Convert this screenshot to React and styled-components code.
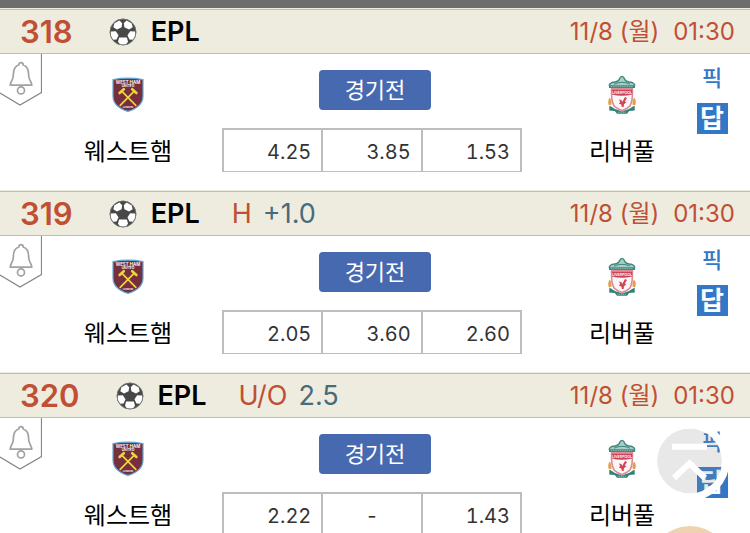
import React from 'react';
import styled, { createGlobalStyle } from 'styled-components';

const GlobalStyle = createGlobalStyle`
    * {
        box-sizing: border-box;
    }

    html {
        scrollbar-width: none;
    }

    body {
        margin: 0;
        background: #fff;
        color: #000;
        font-family: Inter, 'Noto Sans CJK KR', sans-serif;
    }

    button {
        font-family: inherit;
        padding: 0;
        border: none;
        cursor: pointer;
    }
`

const TopBar = styled.div`
    height: 8px;
    background: #6d6d6d;
`

const MatchHeader = styled.header`
    display: flex;
    align-items: center;
    height: 46px;
    padding: 2px 15px 0 20px;
    background: #eeecdf;
    border-bottom: 1px solid #bdbdba;
    box-shadow: inset 0 1px #eeecdf, inset 0 2px #bdbdba;
    white-space: nowrap;
`

const MatchNumber = styled.span`
    margin-right: 36px;
    font-size: 31px;
    font-weight: 600;
    color: #c04f33;
`

const League = styled.h2`
    margin: 0 32px 0 14px;
    font-size: 27px;
    font-weight: 600;
`

const BetType = styled.span`
    margin-right: 11px;
    font-size: 27px;
    color: #c04f33;
`

const BetLine = styled.span`
    font-size: 27px;
    color: #476a7d;
`

const Kickoff = styled.time`
    display: flex;
    gap: 14px;
    margin-left: auto;
    font-size: 24px;
    line-height: 32px;
    color: #c04f33;
`

const MatchBody = styled.div`
    display: grid;
    grid-template-columns: 76px 4fr 15fr 4fr 76px;
    align-items: start;
    height: 136px;
`

const AlarmButton = styled.button`
    display: block;
    width: 42px;
    height: 52px;
    background: none;

    svg {
        display: block;
    }
`

const Team = styled.div`
    display: flex;
    flex-direction: column;
    align-items: center;
    gap: 18px;
    padding-top: 20px;

    svg {
        display: block;
    }
`

const TeamName = styled.span`
    font-size: 24px;
    line-height: 36px;
    white-space: nowrap;
`

const Centre = styled.div`
    display: flex;
    flex-direction: column;
    align-items: center;
    gap: 18px;
    padding-top: 16px;
`

const StatusButton = styled.button`
    width: 112px;
    height: 40px;
    border-radius: 4px;
    background: #4769b0;
    color: #fff;
    font-size: 22px;
    line-height: 40px;
`

const OddsWrapper = styled.div`
    width: 100%;
    padding: 0 48px 0 42px;
`

const Odds = styled.table`
    width: 100%;
    table-layout: fixed;
    border-spacing: 0;
    border: 2px solid #bdbdbd;
    border-width: 2px 0 1px 2px;
`

const Odd = styled.td`
    height: 41px;
    padding: ${({ $empty }) => ($empty ? '2px 0 0' : '2px 10px 0 0')};
    border-right: 2px solid #bdbdbd;
    font-size: 20px;
    font-variant-numeric: tabular-nums;
    line-height: 24px;
    text-align: ${({ $empty }) => ($empty ? 'center' : 'right')};
    color: #333;
`

const Side = styled.div`
    display: flex;
    flex-direction: column;
    align-items: center;
    gap: 9px;
    padding-top: 8px;
`

const PickLink = styled.a`
    font-size: 22px;
    font-weight: 500;
    line-height: 32px;
    color: #3378c7;
    text-decoration: none;
`

const AnswerLink = styled.a`
    width: 31px;
    height: 31px;
    background: #3378c7;
    color: #fff;
    font-size: 26px;
    font-weight: 700;
    line-height: 32px;
    text-align: center;
    text-decoration: none;
`

const FloatingMenu = styled.div`
    position: fixed;
    right: 20px;
    bottom: -73px;
    display: flex;
    flex-direction: column;
    gap: 25px;
`

const FloatingButton = styled.button`
    width: 80px;
    height: 80px;
    border-radius: 50%;
    background: ${({ $color }) => $color || 'none'};

    svg {
        display: block;
    }
`

const Football = () => (
    <svg width="28" height="28" viewBox="0 0 28 28" aria-hidden="true">
        <defs>
            <clipPath id="ball">
                <circle cx="14" cy="14" r="13" />
            </clipPath>
        </defs>
        <circle cx="14" cy="14" r="13.2" fill="#484848" />
        <g clipPath="url(#ball)" fill="#fff">
            <path d="M5.4 5.2 10.5 2.6 13.2 5.2 12.6 9.3 8 11.6 4.3 9.3z" />
            <path d="M22.6 5.2 17.5 2.6 14.8 5.2 15.4 9.3 20 11.6 23.7 9.3z" />
            <path d="M1.8 13.6 6.8 13.2 9.5 17.2 7.6 21.4 3.9 21.7 1.4 17.5z" />
            <path d="M26.2 13.6 21.2 13.2 18.5 17.2 20.4 21.4 24.1 21.7 26.6 17.5z" />
            <path d="M10.1 19.4H17.9L19 23.8 16.8 26.7H11.2L9 23.8z" />
        </g>
        <circle cx="14" cy="14" r="13" fill="none" stroke="#777" strokeWidth="0.8" />
    </svg>
)

const Bell = () => (
    <svg width="42" height="52" viewBox="0 0 42 52" fill="none" aria-hidden="true">
        <path d="M41.5 0V38.5L20 51 0 39" stroke="#858585" strokeWidth="1.2" />
        <path
            d="M18.8 11C18.8 7.7 23.2 7.7 23.2 11 27.4 12.3 28.6 16 28.6 20.5 28.6 26.5 31.8 27.5 31.8 31.2H10.2C10.2 27.5 13.4 26.5 13.4 20.5 13.4 16 14.6 12.3 18.8 11Z"
            stroke="#a2a2a2"
            strokeWidth="1.7"
            strokeLinejoin="round"
        />
        <circle cx="21" cy="36.4" r="3.5" stroke="#a2a2a2" strokeWidth="1.7" />
    </svg>
)

const WestHamCrest = () => (
    <svg width="40" height="42" viewBox="0 0 40 42" aria-hidden="true">
        <path
            d="M5 5.6Q20 2.8 35 5.6V22C35 30 28 35 20 37.4 12 35 5 30 5 22Z"
            fill="#762f3e"
            stroke="#60a9d4"
            strokeWidth="1.2"
        />
        <g fill="#fff" fontFamily="Inter, sans-serif" fontWeight="600" textAnchor="middle">
            <text x="20" y="9.8" fontSize="4.4">WEST HAM</text>
            <text x="20" y="13.2" fontSize="3.4">UNITED</text>
            <text x="20" y="34.2" fontSize="2.4">LONDON</text>
        </g>
        <g stroke="#f0d43c" strokeLinecap="round" fill="none">
            <path d="M14.2 17.6 27.8 31.4M25.8 17.6 12.2 31.4" strokeWidth="1.7" />
            <path d="M11.6 19 15.8 15.2M28.4 19 24.2 15.2" strokeWidth="2.6" />
        </g>
    </svg>
)

const LiverpoolCrest = () => (
    <svg width="40" height="42" viewBox="0 0 40 42" aria-hidden="true">
        <path d="M7 11.6Q8 8 13 7.6 17 7 18 3.4 20 .6 22 3.4 23 7 27 7.6 32 8 33 11.6Z" fill="#a9cdc7" />
        <g fill="none" stroke="#3f877c">
            <path d="M7 11.6Q8 8.2 13 8 17 7.4 18 3.8 20 1 22 3.8 23 7.4 27 8 32 8.2 33 11.6" strokeWidth="1.4" />
            <path d="M12 10.2Q20 6.4 28 10.2" strokeWidth="1" />
            <path d="M7 12.6H33" strokeWidth="2.8" />
            <path d="M9 12.6H31" stroke="#a8cdc6" strokeWidth="0.8" strokeDasharray="1 .8" />
        </g>
        <path d="M9.6 14.8H30.4Q31 28 27.6 32.4 24 35.4 20 36.6 16 35.4 12.4 32.4 9 28 9.6 14.8Z" fill="#fdf6f7" stroke="#d98d97" strokeWidth="1.6" />
        <path d="M9.8 15.4H30.2V20.6Q20 23 9.8 20.6Z" fill="#cb4459" />
        <text x="20" y="19.8" fontSize="3.6" fontWeight="600" fontFamily="Inter, sans-serif" textAnchor="middle" fill="#fff">LIVERPOOL</text>
        <path
            d="M16.8 25.6 19.4 26 20.2 28 23 23 25 24 22.8 27.6 24.4 28.2 22 30.2 21.6 33H19.8L19.4 30.6 17 29.8 18.2 27.8Z"
            fill="#d04459"
        />
        <g fill="#e4a04e">
            <path d="M7.8 23.4Q10.4 27 9.2 31H6.8Q5.2 27 7.8 23.4Z" />
            <path d="M32.2 23.4Q29.6 27 30.8 31H33.2Q34.8 27 32.2 23.4Z" />
        </g>
        <path d="M7.4 31.6 13 35 20 37.4 27 35 32.6 31.6 32.8 36.6 27.2 37 25 39.8H15L12.8 37 7.2 36.6Z" fill="#347f76" />
        <path d="M15.5 38.2H24.5" stroke="#a8cdc6" strokeWidth="0.9" strokeDasharray="1 .8" />
    </svg>
)

const ToTop = () => (
    <svg width="80" height="80" viewBox="0 0 80 80" fill="none" stroke="#fff" aria-hidden="true">
        <circle cx="39.5" cy="40" r="32.5" fill="#8c8c8c" fillOpacity="0.2" stroke="none" />
        <circle cx="39.5" cy="40" r="36.2" strokeWidth="7.5" />
        <path d="M22 25.8H57M24 57 39.5 42.4 55 57" strokeWidth="6" />
    </svg>
)

const matches = [
    { id: 318, odds: ['4.25', '3.85', '1.53'] },
    { id: 319, type: 'H', line: '+1.0', odds: ['2.05', '3.60', '2.60'] },
    { id: 320, type: 'U/O', line: '2.5', odds: ['2.22', '-', '1.43'] },
]

const Match = ({ id, type, line, odds }) => {

    return (
        <article>
            <MatchHeader>
                <MatchNumber>{id}</MatchNumber>
                <Football />
                <League>EPL</League>
                {type && <BetType>{type}</BetType>}
                {line && <BetLine>{line}</BetLine>}
                <Kickoff>
                    <span>11/8 (월)</span>
                    <span>01:30</span>
                </Kickoff>
            </MatchHeader>
            <MatchBody>
                <AlarmButton type="button" aria-label="알림">
                    <Bell />
                </AlarmButton>
                <Team>
                    <WestHamCrest />
                    <TeamName>웨스트햄</TeamName>
                </Team>
                <Centre>
                    <StatusButton type="button">경기전</StatusButton>
                    <OddsWrapper>
                        <Odds>
                            <tbody>
                                <tr>
                                    {odds.map((odd) => (
                                        <Odd key={odd} $empty={odd === '-'}>{odd}</Odd>
                                    ))}
                                </tr>
                            </tbody>
                        </Odds>
                    </OddsWrapper>
                </Centre>
                <Team>
                    <LiverpoolCrest />
                    <TeamName>리버풀</TeamName>
                </Team>
                <Side>
                    <PickLink href="#pick">픽</PickLink>
                    <AnswerLink href="#answer">답</AnswerLink>
                </Side>
            </MatchBody>
        </article>
    )
}

const App = () => {

    return (
        <>
            <GlobalStyle />
            <TopBar />
            <main>
                {matches.map((match) => (
                    <Match key={match.id} {...match} />
                ))}
            </main>
            <FloatingMenu>
                <FloatingButton type="button" aria-label="맨 위로">
                    <ToTop />
                </FloatingButton>
                <FloatingButton type="button" aria-label="메뉴" $color="#efd3b0" />
            </FloatingMenu>
        </>
    )
}

export default App;
